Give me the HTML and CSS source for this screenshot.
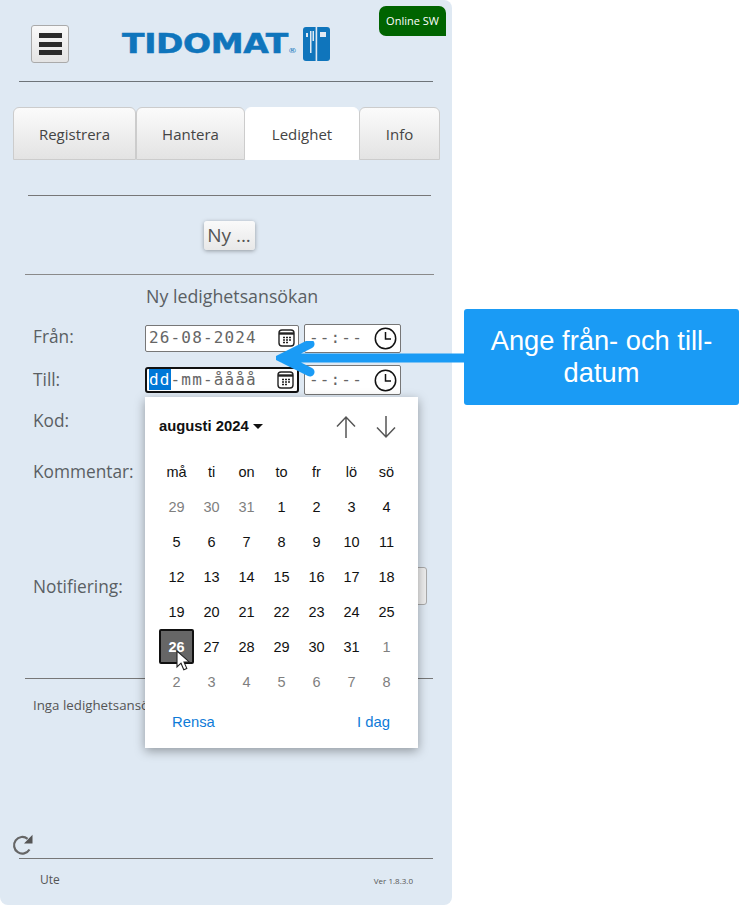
FILE: index.html
```html
<!DOCTYPE html>
<html lang="sv">
<head>
<meta charset="utf-8">
<title>Tidomat</title>
<link rel="stylesheet" href="styles.css">
</head>
<body>
<div class="panel">
  <span class="badge">Online SW</span>
  <header class="top">
    <button class="burger" type="button" aria-label="Meny">
      <span></span><span></span><span></span>
    </button>
    <div class="logo">
      <span class="logo-text">TIDOMAT<span class="reg">®</span></span>
      <svg class="logo-mark" width="27" height="34" viewBox="0 0 27 34">
        <rect x="0" y="0" width="27" height="34" rx="3" fill="#0f75bc"/>
        <rect x="12.6" y="0" width="1.6" height="34" fill="#dfe9f3"/>
        <rect x="3" y="6" width="2" height="4" fill="#dfe9f3"/>
        <rect x="7" y="4" width="1.5" height="22" fill="#dfe9f3"/>
        <rect x="9.5" y="4" width="1.5" height="10" fill="#dfe9f3"/>
        <rect x="17" y="5" width="6" height="5" fill="#dfe9f3"/>
      </svg>
    </div>
  </header>
  <nav class="tabs">
    <a class="tab tab-reg">Registrera</a>
    <a class="tab tab-han">Hantera</a>
    <a class="tab tab-led active">Ledighet</a>
    <a class="tab tab-inf">Info</a>
  </nav>
  <hr class="rule rule-a">
  <div class="new-wrap"><button class="new" type="button">Ny ...</button></div>
  <hr class="rule rule-b">
  <h1 class="title">Ny ledighetsansökan</h1>
  <div class="row row-from">
    <label class="lbl">Från:</label>
    <div class="date"><span class="val">26-08-2024</span>
      <svg class="cal" width="17" height="18" viewBox="0 0 17 18"><rect x="1" y="1" width="15" height="16" rx="3" fill="none" stroke="#222" stroke-width="1.4"/><path d="M1 4.500h15" stroke="#222" stroke-width="2.400"/><path d="M5 8.500h2M8 8.500h2M11 8.500h2M5 11h2M8 11h2M11 11h2M5 13.500h2M8 13.500h2" stroke="#222" stroke-width="1.500"/></svg>
    </div>
    <div class="time"><span class="val">--:--</span>
      <svg class="clk" width="23" height="23" viewBox="0 0 23 23"><circle cx="11.500" cy="11.500" r="10.200" fill="none" stroke="#111" stroke-width="1.500"/><path d="M11.500 5v7h5.500" fill="none" stroke="#111" stroke-width="1.500"/></svg>
    </div>
  </div>
  <div class="row row-till">
    <label class="lbl">Till:</label>
    <div class="date focus"><span class="val"><span class="sel">dd</span>-mm-åååå</span>
      <svg class="cal" width="17" height="18" viewBox="0 0 17 18"><rect x="1" y="1" width="15" height="16" rx="3" fill="none" stroke="#222" stroke-width="1.4"/><path d="M1 4.500h15" stroke="#222" stroke-width="2.400"/><path d="M5 8.500h2M8 8.500h2M11 8.500h2M5 11h2M8 11h2M11 11h2M5 13.500h2M8 13.500h2" stroke="#222" stroke-width="1.500"/></svg>
    </div>
    <div class="time"><span class="val">--:--</span>
      <svg class="clk" width="23" height="23" viewBox="0 0 23 23"><circle cx="11.500" cy="11.500" r="10.200" fill="none" stroke="#111" stroke-width="1.500"/><path d="M11.500 5v7h5.500" fill="none" stroke="#111" stroke-width="1.500"/></svg>
    </div>
  </div>
  <div class="row row-kod"><label class="lbl">Kod:</label></div>
  <div class="row row-kom"><label class="lbl">Kommentar:</label></div>
  <div class="row row-not"><label class="lbl">Notifiering:</label><span class="ghost-btn"></span></div>
  <hr class="rule rule-c">
  <p class="none">Inga ledighetsansökningar</p>
  <div class="foot">
    <svg class="refresh" width="22" height="22" viewBox="0 0 22 22"><path d="M17.500 15.500A8.300 8.300 0 1 1 15.600 4.800" fill="none" stroke="#666" stroke-width="2.200"/><path d="M20.500 0.800V9.500H12Z" fill="#555"/></svg>
    <hr class="rule rule-d">
    <div class="foot-row"><span class="ute">Ute</span><span class="ver">Ver 1.8.3.0</span></div>
  </div>
</div>

<div class="picker">
  <div class="pk-head">
    <span class="month">augusti 2024</span><span class="caret"></span>
    <svg class="ar ar-up" width="22" height="24" viewBox="0 0 22 24"><path d="M11 23V2M2 11.500 11 2l9 9.500" fill="none" stroke="#555" stroke-width="1.500"/></svg>
    <svg class="ar" width="22" height="24" viewBox="0 0 22 24"><path d="M11 1v21M2 12.500 11 22l9-9.500" fill="none" stroke="#555" stroke-width="1.500"/></svg>
  </div>
  <div class="grid">
    <span>må</span><span>ti</span><span>on</span><span>to</span><span>fr</span><span>lö</span><span>sö</span>
    <span class="off">29</span><span class="off">30</span><span class="off">31</span><span>1</span><span>2</span><span>3</span><span>4</span>
    <span>5</span><span>6</span><span>7</span><span>8</span><span>9</span><span>10</span><span>11</span>
    <span>12</span><span>13</span><span>14</span><span>15</span><span>16</span><span>17</span><span>18</span>
    <span>19</span><span>20</span><span>21</span><span>22</span><span>23</span><span>24</span><span>25</span>
    <span class="today">26</span><span>27</span><span>28</span><span>29</span><span>30</span><span>31</span><span class="off">1</span>
    <span class="off">2</span><span class="off">3</span><span class="off">4</span><span class="off">5</span><span class="off">6</span><span class="off">7</span><span class="off">8</span>
  </div>
  <div class="pk-foot"><a>Rensa</a><a>I dag</a></div>
</div>

<svg class="cursor" width="15" height="22" viewBox="0 0 15 22"><path d="M1 1v16l4-3.800 2.800 6.500 3-1.300-2.800-6.300h5.500Z" fill="#fff" stroke="#222" stroke-width="1.100"/></svg>

<svg class="arrow" width="190" height="40" viewBox="0 0 190 40"><path d="M189 17H6M34 3 6 17l28 14" fill="none" stroke="#1a9bf5" stroke-width="9" stroke-linecap="round" stroke-linejoin="miter"/></svg>
<div class="callout">Ange från- och till-datum</div>
</body>
</html>
```

FILE: styles.css
```css
* { box-sizing: border-box; }
html, body { margin: 0; padding: 0; background: #fff; }
body { width: 741px; height: 905px; overflow: hidden; position: relative; font-family: "Open Sans", "Noto Sans", sans-serif; color: #555; }

.panel { position: relative; width: 452px; height: 905px; background: #dfe9f3; border-radius: 0 8px 8px 8px; display: flex; flex-direction: column; }

.badge { position: absolute; left: 379px; top: 6px; width: 67px; height: 30px; background: #006400; color: #fff; font-size: 11px; line-height: 30px; text-align: center; border-radius: 7px 7px 0 7px; }

.top { height: 82px; margin: 0 19px; border-bottom: 1px solid #6e7479; position: relative; display: flex; padding: 25px 0 0 12px; }
.burger { width: 38px; height: 38px; padding: 7px 7px; border: 1px solid #aaa; border-radius: 3px; background: linear-gradient(#f9f9f9, #e4e4e4); display: flex; flex-direction: column; justify-content: space-between; }
.burger span { display: block; height: 5px; width: 23px; background: #2b2b2b; }
.logo { display: flex; align-items: flex-start; margin: 2px 0 0 53px; width: 208px; justify-content: space-between; }
.logo-text { display: inline-block; color: #0f75bc; font-family: "DejaVu Sans", sans-serif; font-weight: 700; font-size: 26px; line-height: 30px; margin-top: 2px; transform: scaleX(1.270); transform-origin: left center; letter-spacing: -0.300px; -webkit-text-stroke: 0.500px #0f75bc; }
.reg { font-size: 7px; font-weight: 400; vertical-align: baseline; letter-spacing: 0; -webkit-text-stroke: 0; }
.logo-mark { display: block; }

.tabs { display: flex; margin: 25px 0 0 13px; height: 53px; }
.tab { display: flex; align-items: center; justify-content: center; font-size: 15px; color: #444; border: 1px solid #ccc; border-radius: 6px 6px 0 0; background: linear-gradient(#fbfbfb, #e3e3e3); }
.tab-reg { width: 123px; }
.tab-han { width: 109px; }
.tab-led { width: 114px; }
.tab-inf { width: 81px; }
.tab.active { background: #fff; border-color: #fff; }

.rule { border: 0; height: 1px; margin: 0; background: #777; }
.rule-a { margin: 35px 21px 0 28px; }
.new-wrap { display: flex; justify-content: center; margin: 25px 0 0 6px; height: 53px; }
.new { width: 51px; height: 29px; padding: 0 0 2px; border: 0; border-radius: 3px; background: linear-gradient(#fafafa, #e8e8e8); box-shadow: 0 1px 4px rgba(0,0,0,.35); font-family: inherit; font-size: 19px; color: #555; }
.rule-b { margin: 0 18px 0 25px; background: #8a8a8a; }

.title { margin: 9px 0 0 146px; font-size: 17.800px; font-weight: 400; line-height: 24px; color: #5a5f63; white-space: nowrap; }

.row { display: flex; align-items: center; padding-left: 33px; position: relative; }
.lbl { width: 112px; font-size: 17.300px; line-height: 22px; color: #5a5f63; }
.row-from .lbl { padding-bottom: 2px; }
.row-from { margin-top: 15px; height: 30px; }
.row-till { margin-top: 12px; height: 30px; }
.row-kod { margin-top: 15px; height: 22px; }
.row-kom { margin-top: 29px; height: 22px; }
.row-not { margin-top: 93px; height: 22px; }
.ghost-btn { position: absolute; left: 380px; top: -9px; width: 47px; height: 38px; background: #eee; border: 1px solid #aaa; border-radius: 3px; }

.date, .time { display: flex; align-items: center; justify-content: space-between; background: #fff; border: 1px solid #777; border-radius: 2px; font-family: "DejaVu Sans Mono", "Liberation Mono", monospace; font-size: 16px; letter-spacing: 1.150px; color: #666; }
.date { width: 154px; height: 27px; padding: 0 3px 0 3px; }
.time { width: 97px; height: 29px; margin-left: 5px; padding: 0 3px 0 4px; }
.row-till .time { height: 30px; }
.date.focus { border: 2px solid #111; border-radius: 3px; padding: 0 3px 0 2px; height: 26px; }
.val { white-space: nowrap; margin-top: -2px; }
.sel { background: #0078d7; color: #fff; padding: 1px 0; }
.cal, .clk { flex: none; }

.rule-c { margin: 80px 19px 0 25px; }
.none { margin: 17px 0 0 33px; font-size: 13.300px; line-height: 18px; color: #555; white-space: nowrap; }

.foot { margin-top: auto; padding-bottom: 17px; }
.refresh { display: block; margin-left: 12px; margin-bottom: 0; }
.rule-d { margin: 2px 19px 0 19px; }
.foot-row { display: flex; justify-content: space-between; align-items: baseline; padding: 12px 39px 0 40px; }
.ute { font-size: 12px; color: #555; }
.ver { font-size: 8px; color: #555; }

.picker { position: absolute; left: 145px; top: 397px; width: 273px; height: 351px; background: #fff; box-shadow: 0 3px 10px rgba(0,0,0,.35); font-family: "Liberation Sans", Arial, sans-serif; font-size: 14.500px; color: #111; padding: 0 14px; display: flex; flex-direction: column; }
.pk-head { display: flex; align-items: center; height: 58px; }
.month { font-weight: 700; font-size: 14.800px; }
.caret { width: 0; height: 0; border-left: 5px solid transparent; border-right: 5px solid transparent; border-top: 5px solid #111; margin-left: 4px; }
.ar-up { margin-left: 72px; margin-right: 18px; margin-top: 2px; }
.ar { margin-top: 2px; }
.grid { display: grid; grid-template-columns: repeat(7, 35px); grid-auto-rows: 35px; margin-top: -1px; }
.grid span { display: flex; align-items: center; justify-content: center; }
.grid .off { color: #7f7f7f; }
.grid .today { background: #666; border: 2px solid #111; border-radius: 2px; color: #fff; font-weight: 700; }
.pk-foot { display: flex; justify-content: space-between; padding: 0 14px 0 13px; margin-top: 15px; font-size: 14.800px; color: #0e7bd8; }

.cursor { position: absolute; left: 176px; top: 650px; }
.arrow { position: absolute; left: 276px; top: 341px; }
.callout { position: absolute; left: 464px; top: 309px; width: 275px; height: 96px; background: #1a9bf5; border-radius: 3px; color: #fff; font-family: "Liberation Sans", Arial, sans-serif; font-size: 27.300px; line-height: 32px; text-align: center; padding: 16px 14px; }
```
